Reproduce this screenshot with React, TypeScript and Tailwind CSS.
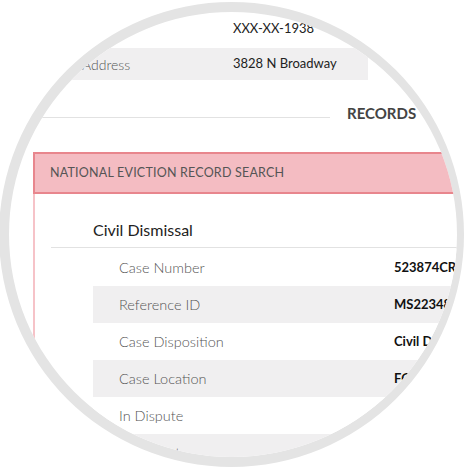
import React from "react";

const FONT = { fontFamily: "Lato, 'Open Sans', sans-serif" };

const rows = [
  { label: "Case Number", value: "523874CR19" },
  { label: "Reference ID", value: "MS2234817" },
  { label: "Case Disposition", value: "Civil Dismissal" },
  { label: "Case Location", value: "FORT WORTH" },
  { label: "In Dispute", value: "" },
  { label: "Judgment", value: "" },
];

const App = () => {
  return (
    <div className="w-[466px] h-[469px] bg-white overflow-hidden" style={FONT}>
      {/* magnifier */}
      <div className="-ml-px mt-[2px] w-[465px] h-[465px] rounded-full border-[10px] border-r-[7px] border-[#e4e4e4] overflow-hidden bg-white">
        <div className="w-[520px]">
          {/* person details */}
          <div className="flex items-center h-[34px] w-[359px] pl-[73px]">
            <div className="w-[151px]" />
            <div className="text-[13px] text-[#222]">XXX-XX-1938</div>
          </div>
          <div className="flex items-center mt-[2px] h-[32px] w-[359px] pl-[73px] bg-[#f0eff0]">
            <div className="w-[151px] text-[14px] font-light text-[#555]">Address</div>
            <div className="text-[13px] text-[#222]">3828 N Broadway</div>
          </div>

          {/* section title */}
          <div className="flex items-start mt-[23px]">
            <div className="w-[321px] h-px bg-[#e2e2e2] mt-[14px]" />
            <div className="ml-[17px] text-[15px] leading-[20px] font-bold text-[#444]">RECORDS</div>
          </div>

          {/* eviction box */}
          <div className="ml-[24px] mt-[29px] w-[480px]">
            <div className="flex items-center h-[42px] pl-[15px] bg-[#f4bcc2] border-2 border-r-0 border-[#e8868d]">
              <span className="text-[12.5px] text-[#555] tracking-[0.2px]">NATIONAL EVICTION RECORD SEARCH</span>
            </div>
            <div className="border-l-2 border-[#f6c3c8] pl-[16px] pb-10">
              <div className="pl-[42px] pt-[24px] pb-[5px] leading-[24px] text-[16px] text-[#222] border-b border-[#e2e2e2]">
                Civil Dismissal
              </div>
              <div className="mt-[1px] ml-[42px]">
                {rows.map((r, i) => (
                  <div
                    key={r.label}
                    className={`flex items-center h-[37px] pl-[26px] ${i % 2 === 1 ? "bg-[#f0eff0]" : "bg-white"}`}
                  >
                    <div className="w-[275px] text-[14.5px] font-light text-[#555]">{r.label}</div>
                    <div className="text-[13px] font-bold text-[#111]">{r.value}</div>
                  </div>
                ))}
              </div>
            </div>
          </div>
        </div>
      </div>
    </div>
  );
};

export default App;
